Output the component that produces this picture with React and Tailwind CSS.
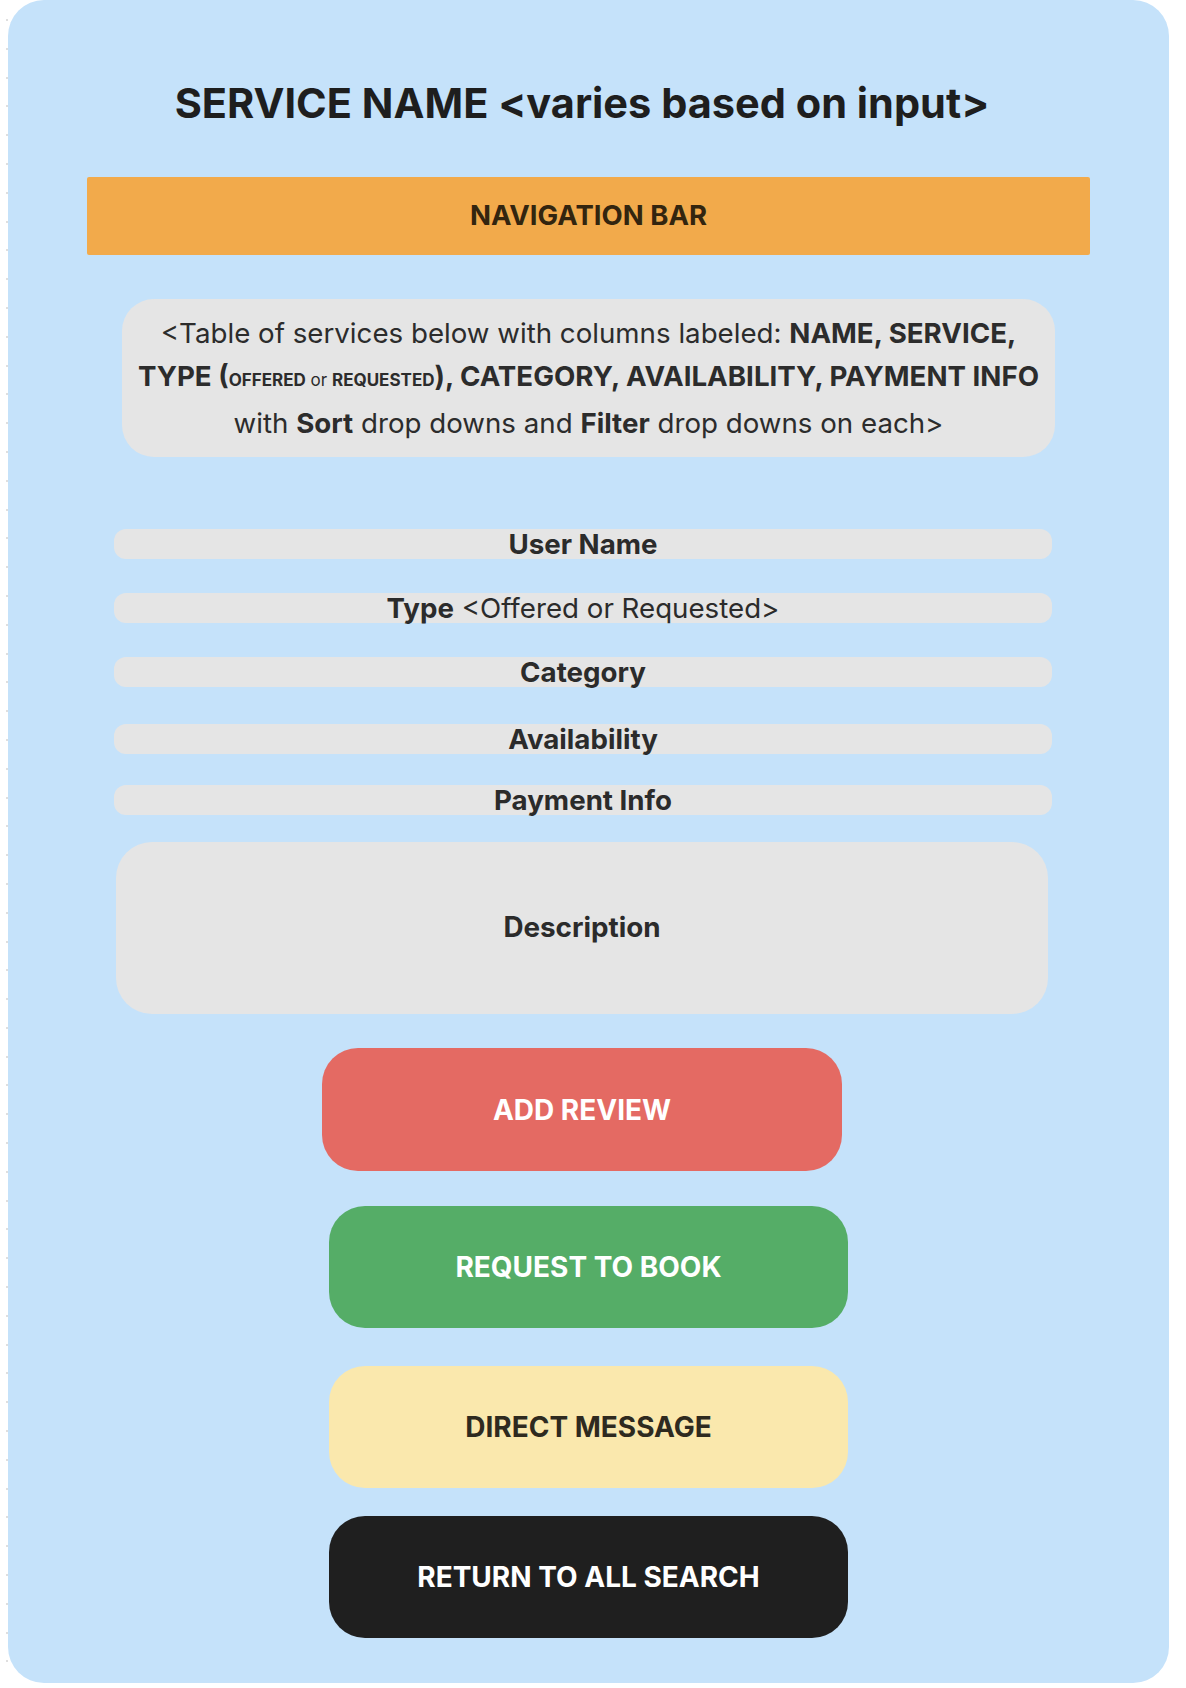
const rows = [
  { label: "User Name", mt: "mt-[72px]" },
  { label: "Type", extra: " <Offered or Requested>", mt: "mt-[34px]" },
  { label: "Category", mt: "mt-[34px]" },
  { label: "Availability", mt: "mt-[37px]" },
  { label: "Payment Info", mt: "mt-[31px]" },
];

function FieldRow({ label, extra, mt }) {
  return (
    <div
      className={`${mt} ml-[106px] w-[938px] h-[30px] rounded-[12px] bg-[#e5e5e5] flex items-center justify-center text-[27.7px] leading-[30px] text-[#2b2b2b]`}
    >
      <span className="font-bold">{label}</span>
      {extra && <span className="whitespace-pre">{extra}</span>}
    </div>
  );
}

function ActionButton({ children, className }) {
  return (
    <button
      className={`h-[122px] w-[519px] rounded-[36px] flex items-center justify-center text-[28px] font-bold ${className}`}
    >
      {children}
    </button>
  );
}

export default function App() {
  // left dotted guide beside the frame
  const dots = Array.from({ length: 58 });

  return (
    <div className="w-[1186px] h-[1688px] bg-white flex font-['Inter',sans-serif]">
      <div className="w-[8px] flex flex-col items-end pt-[19px] gap-[26.8px]">
        {dots.map((_, i) => (
          <span key={i} className="w-[2px] h-[2px] rounded-full bg-[#d4d4d4]" />
        ))}
      </div>

      <div className="w-[1161px] h-[1683px] rounded-[36px] bg-[#c5e2fa] flex flex-col items-start pt-[77px]">
        {/* Title */}
        <h1 className="w-full pr-[13px] text-center text-[41.5px] leading-[52px] font-bold text-[#1e1e1e]">
          SERVICE NAME &lt;varies based on input&gt;
        </h1>

        {/* Nav */}
        <div className="mt-[48px] ml-[79px] w-[1003px] h-[78px] rounded-[2px] bg-[#f2aa4b] flex items-center justify-center text-[27.5px] font-bold text-[#33250f]">
          NAVIGATION BAR
        </div>

        {/* Table note */}
        <div className="mt-[44px] ml-[114px] w-[933px] h-[158px] rounded-[32px] bg-[#e5e5e5] flex items-center justify-center text-center text-[27.7px] leading-[43px] text-[#2c2c2c]">
          <p className="whitespace-nowrap">
            &lt;Table of services below with columns labeled: <b>NAME, SERVICE,</b>
            <br />
            <b>TYPE (</b>
            <span className="text-[17px] font-bold">OFFERED</span>
            <span className="text-[17px]"> or </span>
            <span className="text-[17px] font-bold">REQUESTED</span>
            <b>), CATEGORY, AVAILABILITY, PAYMENT INFO</b>
            <br />
            with <b>Sort</b> drop downs and <b>Filter</b> drop downs on each&gt;
          </p>
        </div>

        {/* Fields */}
        {rows.map((r) => (
          <FieldRow key={r.label} {...r} />
        ))}

        <div className="mt-[27px] ml-[108px] w-[932px] h-[172px] rounded-[36px] bg-[#e5e5e5] flex items-center justify-center text-[27.8px] font-bold text-[#2b2b2b]">
          Description
        </div>

        {/* Actions */}
        <div className="mt-[34px] ml-[314px]">
          <ActionButton className="w-[520px] h-[123px] bg-[#e46a63] text-white">ADD REVIEW</ActionButton>
        </div>
        <div className="mt-[35px] ml-[321px]">
          <ActionButton className="bg-[#55ad67] text-white">REQUEST TO BOOK</ActionButton>
        </div>
        <div className="mt-[38px] ml-[321px]">
          <ActionButton className="bg-[#fae8ad] text-[#2e2a1f]">DIRECT MESSAGE</ActionButton>
        </div>
        <div className="mt-[28px] ml-[321px]">
          <ActionButton className="bg-[#1f1f1f] text-white">RETURN TO ALL SEARCH</ActionButton>
        </div>
      </div>
    </div>
  );
}
